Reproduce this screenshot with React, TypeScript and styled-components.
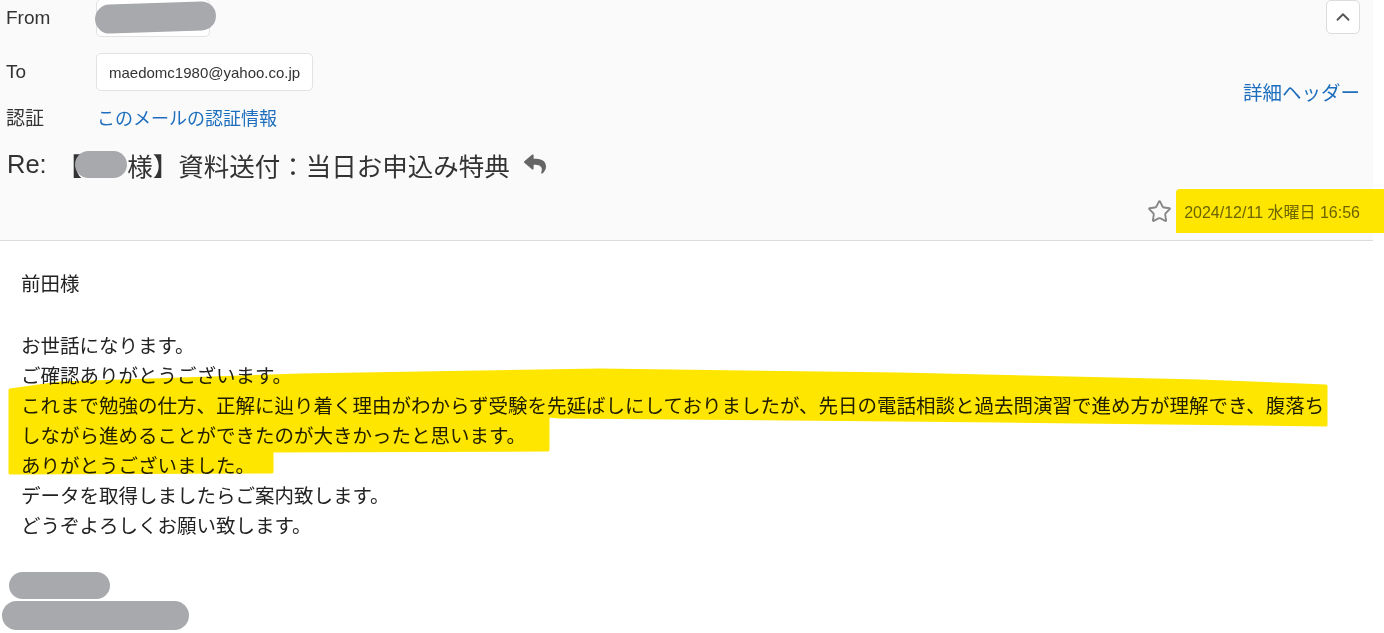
import React from 'react';
import styled, { createGlobalStyle } from 'styled-components';
import { ChevronUp, Star } from 'lucide-react';
import { FaReply } from 'react-icons/fa';

const GlobalStyle = createGlobalStyle`
    html, body {
        margin: 0;
        padding: 0;
        background: #fff;
    }
    body {
        font-family: "Liberation Sans", "Noto Sans CJK JP", sans-serif;
        color: #222;
        overflow: hidden;
    }
`;

const bodyLines = [
    '前田様',
    '',
    'お世話になります。',
    'ご確認ありがとうございます。',
    'これまで勉強の仕方、正解に辿り着く理由がわからず受験を先延ばしにしておりましたが、先日の電話相談と過去問演習で進め方が理解でき、腹落ちしながら進めることができたのが大きかったと思います。',
    'ありがとうございました。',
    'データを取得しましたらご案内致します。',
    'どうぞよろしくお願い致します。',
    '',
];

const App = () => {
    return (
        <Page>
            <GlobalStyle />
            <Header>
                <Top>
                    <Fields>
                        <Label>From</Label>
                        <AddressBox $width={114}>
                            <FromRedaction />
                        </AddressBox>
                        <Label>To</Label>
                        <AddressBox>maedomc1980@yahoo.co.jp</AddressBox>
                        <Label>認証</Label>
                        <Link>このメールの認証情報</Link>
                    </Fields>
                    <Actions>
                        <CollapseButton>
                            <ChevronUp size={22} strokeWidth={2} color="#555" />
                        </CollapseButton>
                        <DetailLink>詳細ヘッダー</DetailLink>
                    </Actions>
                </Top>
                <Subject>
                    <Re>Re:</Re>
                    <span>【</span>
                    <NameRedaction />
                    <span>様】資料送付：当日お申込み特典</span>
                    <ReplyIcon>
                        <FaReply size={22} color="#666" />
                    </ReplyIcon>
                </Subject>
                <Meta>
                    <Star size={25} strokeWidth={1.8} color="#888" />
                    <DateMark>2024/12/11 水曜日 16:56</DateMark>
                </Meta>
            </Header>
            <Body>
                {bodyLines.map((line, i) => (
                    <Line key={i} $gap={i === 1 ? 2 : 0}>
                        {line || '\u00a0'}
                    </Line>
                ))}
                <Line>
                    <Redaction $width={101} $height={27} $offset={-12} />
                </Line>
                <Line>
                    <Redaction $width={187} $height={29} $offset={-19} />
                </Line>
                <Highlighter width="1384" height="392" viewBox="0 0 1384 392">
                    <path
                        d="M10 149 L60 142 L300 134 L600 129 L900 133 L1200 140 L1326 145 L1326 184 L1000 180 L560 176 L548 175 L548 209 L272 210 L272 231 L10 232 Z"
                        fill="#ffe600"
                        stroke="#ffe600"
                        strokeWidth="3"
                        strokeLinejoin="round"
                    />
                </Highlighter>
            </Body>
        </Page>
    );
};

export default App;

const Page = styled.div`
    position: relative;
    width: 1384px;
    height: 633px;
    overflow: hidden;
`;

const Header = styled.div`
    width: 1373px;
    box-sizing: border-box;
    padding: 0 13px 17px 6px;
    background-color: #fafafa;
    border-bottom: 1px solid #dcdcdc;
`;

const Top = styled.div`
    display: flex;
    justify-content: space-between;
    align-items: flex-start;
`;

const Fields = styled.div`
    display: grid;
    grid-template-columns: 90px auto;
    row-gap: 16px;
    align-items: center;
    justify-items: start;
    margin-top: -1px;
`;

const Label = styled.div`
    font-size: 19px;
    line-height: 24px;
    color: #333;
`;

const AddressBox = styled.div<{ $width?: number }>`
    position: relative;
    display: flex;
    align-items: center;
    box-sizing: border-box;
    height: 38px;
    width: ${(p) => (p.$width ? `${p.$width}px` : 'auto')};
    padding: 0 12px;
    background-color: #fff;
    border: 1px solid #e2e2e2;
    border-radius: 5px;
    font-size: 15px;
    color: #333;
`;

const FromRedaction = styled.span`
    position: absolute;
    left: -2px;
    top: 3px;
    width: 121px;
    height: 29px;
    border-radius: 15px;
    background-color: #a8a9ac;
    transform: rotate(-2deg);
`;

const Link = styled.a`
    font-size: 18px;
    line-height: 24px;
    color: #1d6ebd;
    text-decoration: none;
    margin-left: 1px;
`;

const Actions = styled.div`
    display: flex;
    flex-direction: column;
    align-items: flex-end;
`;

const CollapseButton = styled.button`
    display: flex;
    align-items: center;
    justify-content: center;
    width: 34px;
    height: 34px;
    padding: 0;
    background-color: #fff;
    border: 1px solid #dcdcdc;
    border-radius: 5px;
`;

const DetailLink = styled.a`
    margin-top: 47px;
    font-size: 19.5px;
    line-height: 24px;
    color: #1d6ebd;
    text-decoration: none;
`;

const Subject = styled.div`
    display: flex;
    align-items: center;
    height: 36px;
    margin-top: 15px;
    font-size: 25.5px;
    color: #333;
    white-space: nowrap;
`;

const Re = styled.span`
    margin-left: 1px;
    margin-right: 10px;
`;

const NameRedaction = styled.span`
    display: inline-block;
    width: 52px;
    height: 27px;
    margin-left: -7px;
    border-radius: 14px;
    background-color: #a8a9ac;
`;

const ReplyIcon = styled.span`
    display: flex;
    margin-left: 14px;
`;

const Meta = styled.div`
    display: flex;
    justify-content: flex-end;
    align-items: center;
    gap: 4px;
    margin-top: 17px;
    height: 24px;
`;

const DateMark = styled.span`
    padding: 10px 24px 10px 8px;
    margin-right: -24px;
    background-color: #ffe600;
    border-top-left-radius: 4px;
    font-size: 16px;
    color: #6b6400;
`;

const Body = styled.div`
    position: relative;
    padding: 27px 0 0 21px;
    max-width: 1316px;
    font-family: "Noto Sans CJK JP", sans-serif;
    font-size: 19.5px;
    line-height: 30px;
    color: #222;
`;

const Line = styled.div<{ $gap?: number }>`
    display: flex;
    align-items: center;
    min-height: 30px;
    margin-bottom: ${(p) => p.$gap ?? 0}px;
`;

const Redaction = styled.span<{ $width: number; $height: number; $offset: number }>`
    display: inline-block;
    width: ${(p) => p.$width}px;
    height: ${(p) => p.$height}px;
    margin-left: ${(p) => p.$offset}px;
    border-radius: ${(p) => p.$height / 2}px;
    background-color: #a8a9ac;
`;

const Highlighter = styled.svg`
    position: absolute;
    top: 0;
    left: 0;
    pointer-events: none;
    mix-blend-mode: multiply;
`;
